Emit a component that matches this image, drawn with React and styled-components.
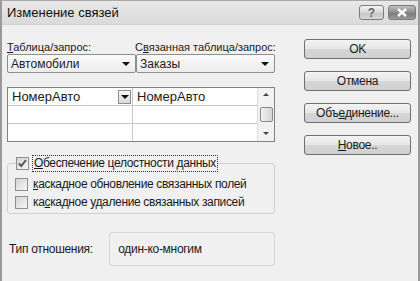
import React from 'react';
import styled, { createGlobalStyle } from 'styled-components';

const GlobalStyle = createGlobalStyle`
    html, body {
        margin: 0;
        padding: 0;
        background: #ffffff;
    }
    body {
        font-family: "Liberation Sans", "DejaVu Sans", sans-serif;
        font-size: 11px;
        color: #1a1a1a;
    }
`;

const Window = styled.div`
    width: 420px;
    height: 281px;
    box-sizing: border-box;
    overflow: hidden;
    background: #f0f0f0;
    border-left: 2px solid #9a9a9a;
    border-right: 2px solid #9a9a9a;
    border-top: 1px solid #a8a8a8;
`;

const TitleBar = styled.div`
    height: 23px;
    display: flex;
    align-items: center;
    justify-content: space-between;
    padding: 0 2px 0 5px;
    background: linear-gradient(#e8e8e8, #dadada);
    border-bottom: 1px solid #d2d2d2;
`;

const Title = styled.span`
    font-size: 13px;
    color: #111;
`;

const TitleButtons = styled.div`
    display: flex;
    gap: 4px;
`;

const CaptionButton = styled.div`
    width: ${p => p.$w}px;
    height: 15px;
    box-sizing: border-box;
    border: 1px solid #7c7c7c;
    border-radius: 3px;
    display: flex;
    align-items: center;
    justify-content: center;
    background: ${p => p.$dark
        ? 'linear-gradient(#bdbdbd, #8c8c8c 50%, #777 51%, #9a9a9a)'
        : 'linear-gradient(#f4f4f4, #d6d6d6 50%, #c4c4c4 51%, #d8d8d8)'};
`;

const Body = styled.div`
    display: flex;
    justify-content: space-between;
    padding: 14px 7px 0 5px;
`;

const LeftPane = styled.div`
    width: 268px;
    display: flex;
    flex-direction: column;
    padding-top: 2px;
`;

const LabelRow = styled.div`
    display: flex;
    height: 13px;
`;

const FieldLabel = styled.div`
    width: ${p => p.$w}px;
    line-height: 13px;
    white-space: nowrap;
`;

const Key = styled.span`
    text-decoration: underline;
    text-underline-offset: 1px;
`;

const ComboRow = styled.div`
    display: flex;
`;

const Combo = styled.div`
    width: ${p => p.$w}px;
    height: 19px;
    box-sizing: border-box;
    border: 1px solid #8e8e8e;
    border-radius: 2px;
    background: linear-gradient(#fbfbfb, #ececec);
    display: flex;
    align-items: center;
    justify-content: space-between;
    padding: 0 5px 0 3px;
    font-size: 12px;
`;

const Arrow = styled.span`
    width: 0;
    height: 0;
    border-left: 4px solid transparent;
    border-right: 4px solid transparent;
    border-top: 4px solid #111;
`;

const Grid = styled.div`
    margin-top: 14px;
    height: 55px;
    box-sizing: border-box;
    border: 1px solid #828282;
    background: #fff;
    display: flex;
`;

const GridCols = styled.div`
    flex: 1;
    display: grid;
    grid-template-columns: 125px 1fr;
    grid-template-rows: 18px 18px 17px;
`;

const Cell = styled.div`
    border-right: ${p => p.$last ? 'none' : '1px solid #c8c8c8'};
    border-bottom: ${p => p.$bottom ? 'none' : '1px solid #c8c8c8'};
    display: flex;
    align-items: center;
    justify-content: space-between;
    padding: 0 1px 0 4px;
    font-size: 13px;
`;

const CellDrop = styled.div`
    width: 13px;
    height: 14px;
    box-sizing: border-box;
    border: 1px solid #8c8c8c;
    background: linear-gradient(#f7f7f7, #dadada);
    display: flex;
    align-items: center;
    justify-content: center;
`;

const ScrollBar = styled.div`
    width: 17px;
    border-left: 1px solid #dcdcdc;
    background: #f2f2f2;
    display: flex;
    flex-direction: column;
    align-items: center;
    justify-content: space-between;
    padding: 5px 0 6px;
    box-sizing: border-box;
`;

const Thumb = styled.div`
    width: 13px;
    height: 15px;
    box-sizing: border-box;
    border: 1px solid #8a8a8a;
    border-radius: 2px;
    background: linear-gradient(90deg, #f0f0f0, #d6d6d6);
`;

const SmallArrow = styled.span`
    width: 0;
    height: 0;
    border-left: 3px solid transparent;
    border-right: 3px solid transparent;
    ${p => p.$up ? 'border-bottom: 3px solid #444;' : 'border-top: 3px solid #444;'}
`;

const Group = styled.fieldset`
    margin: 12px 0 0;
    padding: 3px 0 2px 7px;
    border: 1px solid #d0d0d0;
    border-radius: 3px;
    min-width: 0;
`;

const Legend = styled.legend`
    padding: 0;
    margin-left: 1px;
`;

const CheckRow = styled.label`
    display: flex;
    align-items: center;
    gap: 3px;
    height: 18px;
    white-space: nowrap;
    font-size: 12px;
`;

const Box = styled.span`
    width: 13px;
    height: 13px;
    box-sizing: border-box;
    border: 1px solid #8f8f8f;
    background: linear-gradient(135deg, #d4d4d4, #f6f6f6);
    display: flex;
    align-items: center;
    justify-content: center;
`;

const CheckText = styled.span`
    line-height: 15px;
    padding: 0 1px;
    letter-spacing: -0.35px;
    border: 1px dotted ${p => p.$focus ? '#333' : 'transparent'};
`;

const TypeRow = styled.div`
    display: flex;
    align-items: center;
    margin-top: 18px;
    font-size: 12px;
`;

const TypeLabel = styled.div`
    width: 101px;
    padding-left: 2px;
    letter-spacing: -0.3px;
`;

const TypeBox = styled.div`
    width: 167px;
    height: 34px;
    box-sizing: border-box;
    border: 1px solid #d6d6d6;
    border-radius: 3px;
    padding: 9px 0 0 8px;
    letter-spacing: -0.3px;
`;

const RightPane = styled.div`
    width: 107px;
    display: flex;
    flex-direction: column;
    gap: 12px;
`;

const Button = styled.div`
    height: 20px;
    box-sizing: border-box;
    border: 1px solid #6f6f6f;
    border-radius: 3px;
    background: linear-gradient(#f4f4f4, #e6e6e6 50%, #d6d6d6 51%, #d0d0d0);
    display: flex;
    align-items: center;
    justify-content: center;
    font-size: 12px;
    letter-spacing: -0.3px;
`;

const CheckMark = () => (
    <svg width="11" height="11" viewBox="0 0 11 11">
        <path d="M2 5.5 L4.3 8 L9 2" fill="none" stroke="#555" strokeWidth="2" />
    </svg>
);

export default function App() {
    return (
        <>
            <GlobalStyle />
            <Window>
                <TitleBar>
                    <Title>Изменение связей</Title>
                    <TitleButtons>
                        <CaptionButton $w={25}>
                            <span style={{ fontWeight: 'bold', color: '#666', fontSize: 12 }}>?</span>
                        </CaptionButton>
                        <CaptionButton $w={28} $dark>
                            <svg width="12" height="9" viewBox="0 0 12 9">
                                <path d="M2 1 L10 8 M10 1 L2 8" stroke="#fff" strokeWidth="2.4" />
                            </svg>
                        </CaptionButton>
                    </TitleButtons>
                </TitleBar>
                <Body>
                    <LeftPane>
                        <LabelRow>
                            <FieldLabel $w={128}><Key>Т</Key>аблица/запрос:</FieldLabel>
                            <FieldLabel $w={140}>С<Key>в</Key>язанная таблица/запрос:</FieldLabel>
                        </LabelRow>
                        <ComboRow>
                            <Combo $w={129}>Автомобили<Arrow /></Combo>
                            <Combo $w={139}>Заказы<Arrow /></Combo>
                        </ComboRow>
                        <Grid>
                            <GridCols>
                                <Cell>НомерАвто<CellDrop><Arrow /></CellDrop></Cell>
                                <Cell $last>НомерАвто</Cell>
                                <Cell />
                                <Cell $last />
                                <Cell $bottom />
                                <Cell $bottom $last />
                            </GridCols>
                            <ScrollBar>
                                <SmallArrow $up />
                                <Thumb />
                                <SmallArrow />
                            </ScrollBar>
                        </Grid>
                        <Group>
                            <Legend>
                                <CheckRow>
                                    <Box><CheckMark /></Box>
                                    <CheckText $focus><Key>О</Key>беспечение целостности данных</CheckText>
                                </CheckRow>
                            </Legend>
                            <CheckRow>
                                <Box />
                                <CheckText><Key>к</Key>аскадное обновление связанных полей</CheckText>
                            </CheckRow>
                            <CheckRow>
                                <Box />
                                <CheckText>ка<Key>с</Key>кадное удаление связанных записей</CheckText>
                            </CheckRow>
                        </Group>
                        <TypeRow>
                            <TypeLabel>Тип отношения:</TypeLabel>
                            <TypeBox>один-ко-многим</TypeBox>
                        </TypeRow>
                    </LeftPane>
                    <RightPane>
                        <Button>OK</Button>
                        <Button>Отмена</Button>
                        <Button>Объ<Key>е</Key>динение...</Button>
                        <Button><Key>Н</Key>овое..</Button>
                    </RightPane>
                </Body>
            </Window>
        </>
    );
}
